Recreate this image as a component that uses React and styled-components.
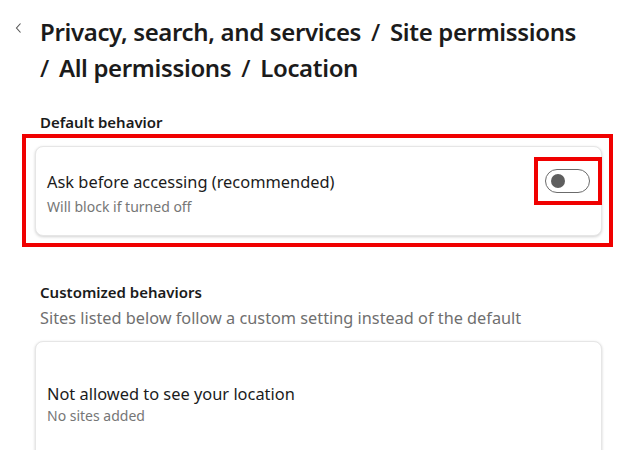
import React from "react";
import styled, { createGlobalStyle } from "styled-components";

const GlobalStyle = createGlobalStyle`
   html, body {
      margin: 0;
      padding: 0;
      background: #ffffff;
      font-family: "Noto Sans", "Open Sans", sans-serif;
      color: #1b1b1b;
   }
`;

const Page = styled.div`
   width: 630px;
   height: 450px;
   overflow: hidden;
   box-sizing: border-box;
   padding: 14px 0 0 14px;
`;

const Header = styled.div`
   display: flex;
   align-items: flex-start;
`;

const BackButton = styled.button`
   border: 0;
   background: none;
   padding: 0;
   margin: 8px 0 0 0;
   width: 26px;
   height: 16px;
   display: flex;
   align-items: flex-start;
   cursor: pointer;
`;

const Title = styled.h1`
   margin: 0;
   font-size: 24px;
   font-weight: 600;
   line-height: 36px;
   letter-spacing: -0.35px;
   color: #1b1b1b;
   width: 560px;
`;

const Crumb = styled.span`
   white-space: nowrap;
`;

const Sep = styled.span`
   margin: ${p => (p.$first ? "0 10px 0 0" : "0 10px")};
   font-weight: 500;
`;

const Body = styled.div`
   padding-left: 26px;
`;

const SectionTitle = styled.h2`
   margin: ${p => p.$top || 0}px 0 0;
   font-size: 15px;
   font-weight: 600;
   line-height: 20px;
   color: #1b1b1b;
`;

const SectionHint = styled.p`
   margin: 5px 0 0;
   font-size: 16.3px;
   line-height: 22px;
   color: #6f6f6f;
`;

const Highlight = styled.div`
   border: 4px solid #f00000;
   padding: 8px 7px 7px 9px;
   margin: 2px 0 0 -18px;
   width: 591px;
   box-sizing: border-box;
`;

const Card = styled.div`
   background: #fff;
   border-radius: 8px;
   border: 1px solid #e6e6e6;
   box-shadow: 0 1px 3px rgba(0, 0, 0, 0.18);
   display: flex;
   align-items: center;
   justify-content: space-between;
   padding: 0 0 0 11px;
   height: 90px;
   box-sizing: border-box;
`;

const CardText = styled.div`
   display: flex;
   flex-direction: column;
   margin-top: ${p => p.$shift || 0}px;
`;

const Label = styled.div`
   font-size: 16.4px;
   line-height: 22px;
   color: #1b1b1b;
`;

const SubLabel = styled.div`
   font-size: 14px;
   line-height: 18px;
   color: #767676;
   margin-top: ${p => p.$gap}px;
`;

const ToggleBox = styled.div`
   border: 4px solid #f00000;
   padding: 8px 8px 8px 7px;
   margin: -20px -1px 0 0;
`;

const Toggle = styled.button`
   position: relative;
   width: 45px;
   height: 24px;
   border-radius: 12px;
   border: 1px solid #6b6b6b;
   background: #fff;
   padding: 0;
   display: block;
   cursor: pointer;

   &::after {
      content: "";
      position: absolute;
      left: 5px;
      top: 4px;
      width: 14px;
      height: 14px;
      border-radius: 50%;
      background: #5e5e5e;
   }
`;

const ListCard = styled(Card)`
   margin: 12px 0 0 -5px;
   width: 567px;
   height: 140px;
   align-items: flex-start;
   padding: 41px 0 0 11px;
`;

export default function App() {
   return (
      <Page>
         <GlobalStyle />
         <Header>
            <BackButton aria-label="Back">
               <svg width="10" height="12" viewBox="0 0 10 12">
                  <path d="M6.5 1.5 L2.5 6 L6.5 10.5" fill="none" stroke="#555" strokeWidth="1.1" />
               </svg>
            </BackButton>
            <Title>
               <Crumb>Privacy, search, and services</Crumb>
               <Crumb><Sep>/</Sep>Site permissions</Crumb>{" "}
               <Crumb><Sep $first>/</Sep>All permissions</Crumb>
               <Crumb><Sep>/</Sep>Location</Crumb>
            </Title>
         </Header>
         <Body>
            <SectionTitle $top={26}>Default behavior</SectionTitle>
            <Highlight>
               <Card>
                  <CardText $shift={5}>
                     <Label>Ask before accessing (recommended)</Label>
                     <SubLabel $gap={5}>Will block if turned off</SubLabel>
                  </CardText>
                  <ToggleBox>
                     <Toggle aria-label="Ask before accessing" />
                  </ToggleBox>
               </Card>
            </Highlight>
            <SectionTitle $top={35}>Customized behaviors</SectionTitle>
            <SectionHint>Sites listed below follow a custom setting instead of the default</SectionHint>
            <ListCard>
               <CardText>
                  <Label>Not allowed to see your location</Label>
                  <SubLabel $gap={2}>No sites added</SubLabel>
               </CardText>
            </ListCard>
         </Body>
      </Page>
   );
}
